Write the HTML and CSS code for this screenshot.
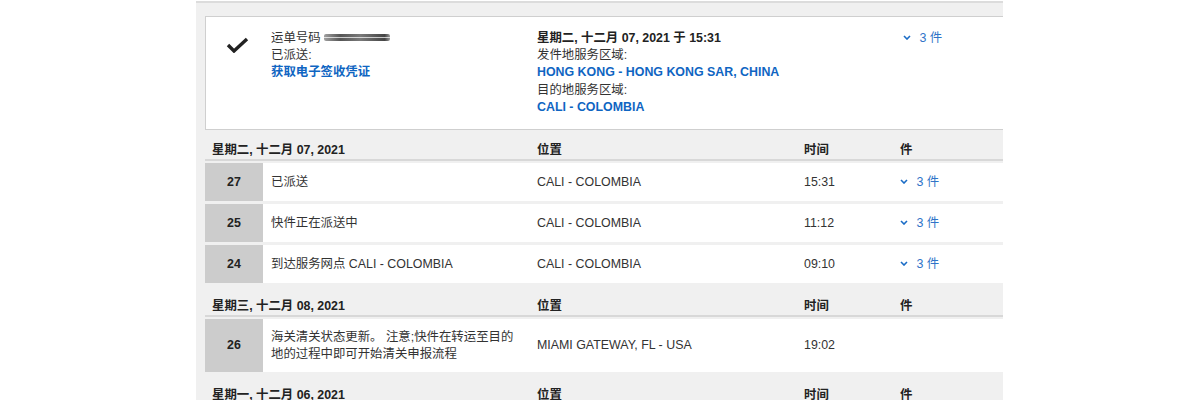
FILE: index.html
```html
<!DOCTYPE html>
<html lang="zh-CN">
<head>
    <meta charset="UTF-8">
    <meta name="viewport" content="width=device-width, initial-scale=1.0">
    <title>运单追踪</title>
    <link rel="stylesheet" href="styles.css">
</head>
<body>

    <div class="panel">

        <!-- 运单概要 -->
        <div class="summary">
            <div class="check">
                <svg width="23" height="16" viewBox="0 0 23 16"><polyline points="2,8 8,14 21,2" fill="none" stroke="#222" stroke-width="3.4"/></svg>
            </div>
            <div class="lines">
                <div>运单号码 <span class="masked"></span></div>
                <div>已派送:</div>
                <a class="link" href="#">获取电子签收凭证</a>
            </div>
            <div class="lines">
                <div class="strong">星期二, 十二月 07, 2021 于 15:31</div>
                <div>发件地服务区域:</div>
                <div class="link">HONG KONG - HONG KONG SAR, CHINA</div>
                <div>目的地服务区域:</div>
                <div class="link">CALI - COLOMBIA</div>
            </div>
            <div class="pieces card-pieces">
                <svg class="chev" width="8" height="5" viewBox="0 0 8 5"><polyline points="1,1 4,4 7,1" fill="none" stroke="#1a6cc6" stroke-width="1.6"/></svg>
                3 件
            </div>
        </div>

        <!-- 星期二 -->
        <div class="day-head">
            <div class="date">星期二, 十二月 07, 2021</div>
            <div>位置</div>
            <div>时间</div>
            <div>件</div>
        </div>
        <div class="event">
            <div class="num">27</div>
            <div class="desc">已派送</div>
            <div>CALI - COLOMBIA</div>
            <div>15:31</div>
            <div class="pieces">
                <svg class="chev" width="8" height="5" viewBox="0 0 8 5"><polyline points="1,1 4,4 7,1" fill="none" stroke="#1a6cc6" stroke-width="1.6"/></svg>
                3 件
            </div>
        </div>
        <div class="event">
            <div class="num">25</div>
            <div class="desc">快件正在派送中</div>
            <div>CALI - COLOMBIA</div>
            <div>11:12</div>
            <div class="pieces">
                <svg class="chev" width="8" height="5" viewBox="0 0 8 5"><polyline points="1,1 4,4 7,1" fill="none" stroke="#1a6cc6" stroke-width="1.6"/></svg>
                3 件
            </div>
        </div>
        <div class="event">
            <div class="num">24</div>
            <div class="desc">到达服务网点 CALI - COLOMBIA</div>
            <div>CALI - COLOMBIA</div>
            <div>09:10</div>
            <div class="pieces">
                <svg class="chev" width="8" height="5" viewBox="0 0 8 5"><polyline points="1,1 4,4 7,1" fill="none" stroke="#1a6cc6" stroke-width="1.6"/></svg>
                3 件
            </div>
        </div>

        <!-- 星期三 -->
        <div class="day-head">
            <div class="date">星期三, 十二月 08, 2021</div>
            <div>位置</div>
            <div>时间</div>
            <div>件</div>
        </div>
        <div class="event">
            <div class="num">26</div>
            <div class="desc">海关清关状态更新。 注意;快件在转运至目的地的过程中即可开始清关申报流程</div>
            <div>MIAMI GATEWAY, FL - USA</div>
            <div>19:02</div>
            <div></div>
        </div>

        <!-- 星期一 -->
        <div class="day-head">
            <div class="date">星期一, 十二月 06, 2021</div>
            <div>位置</div>
            <div>时间</div>
            <div>件</div>
        </div>

    </div>

</body>
</html>
```

FILE: styles.css
```css
body {
    margin: 0;
    padding-top: 1px;
    background: #fff;
    color: #333;
    font-family: 'Liberation Sans', Arial, 'Noto Sans CJK SC', sans-serif;
    font-size: 12.4px;
    line-height: 17px;
}
.panel {
    margin-left: 196px;
    width: 807px;
    box-sizing: border-box;
    background: #f0f0f0;
    border-top: 2px solid #dcdcdc;
    padding: 13px 0 0 9px;
    min-height: 399px;
}

/* 运单概要 */
.summary {
    display: grid;
    grid-template-columns: 57px 274px 363px 1fr;
    background: #fff;
    border: 1px solid #cfcfcf;
    border-right: none;
    padding: 13px 0;
    line-height: 17.2px;
}
.check {
    padding: 7px 0 0 20px;
}
.lines {
    padding-left: 8px;
}
.summary .lines + .lines {
    padding-left: 0;
}
.strong { font-weight: bold; color: #222; }
.link {
    display: block;
    color: #0f65c2;
    font-weight: bold;
    text-decoration: none;
}
.masked {
    display: inline-block;
    width: 66px;
    height: 7px;
    vertical-align: 1px;
    border-radius: 2px;
    background:
        linear-gradient(to bottom, transparent 40%, rgba(255,255,255,0.7) 50%, transparent 60%),
        linear-gradient(to right, #a0a0a0, #555 25%, #7a7a7a 55%, #444 92%, #999);
    filter: blur(0.6px);
}
.pieces {
    color: #2f74c8;
}
.card-pieces { padding-left: 3px; }
.chev {
    margin-right: 5px;
    vertical-align: 2px;
}

/* 每日分组 */
.day-head {
    display: grid;
    grid-template-columns: 332px 267px 96px 1fr;
    padding-top: 12px;
    height: 17px;
    border-bottom: 2px solid #d8d8d8;
    margin-bottom: 2px;
    font-weight: bold;
    color: #222;
}
.day-head .date { padding-left: 7px; }
.event {
    display: grid;
    grid-template-columns: 58px 274px 267px 96px 1fr;
    align-items: center;
    min-height: 38px;
    background: #fff;
    margin-bottom: 3px;
}
.event .num {
    align-self: stretch;
    display: flex;
    align-items: center;
    justify-content: center;
    background: #cccccc;
    font-weight: bold;
    color: #222;
}
.event .desc {
    padding: 10px 18px 10px 8px;
    line-height: 16.5px;
}
```
